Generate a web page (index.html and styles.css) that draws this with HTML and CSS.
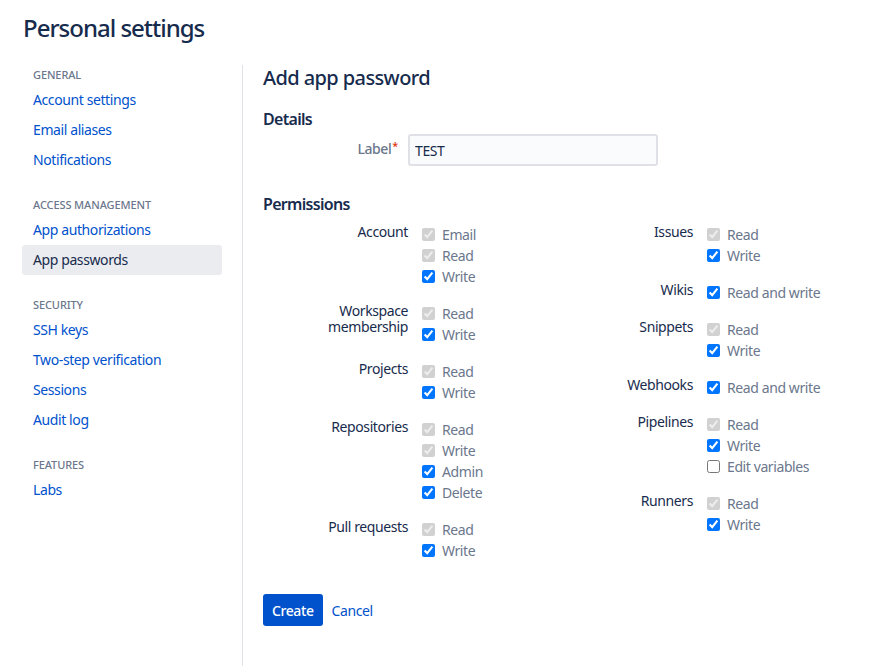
FILE: index.html
```html
<!DOCTYPE html>
<html lang="en">
<head>
<meta charset="utf-8">
<title>Personal settings</title>
<link rel="stylesheet" href="styles.css">
</head>
<body>
<div class="page">
  <h1 class="page-title">Personal settings</h1>
  <div class="layout">
    <nav class="sidebar">
      <div class="nav-section">
        <div class="nav-heading">GENERAL</div>
        <a class="nav-item" href="#">Account settings</a>
        <a class="nav-item" href="#">Email aliases</a>
        <a class="nav-item" href="#">Notifications</a>
      </div>
      <div class="nav-section">
        <div class="nav-heading">ACCESS MANAGEMENT</div>
        <a class="nav-item" href="#">App authorizations</a>
        <a class="nav-item active" href="#">App passwords</a>
      </div>
      <div class="nav-section">
        <div class="nav-heading">SECURITY</div>
        <a class="nav-item" href="#">SSH keys</a>
        <a class="nav-item" href="#">Two-step verification</a>
        <a class="nav-item" href="#">Sessions</a>
        <a class="nav-item" href="#">Audit log</a>
      </div>
      <div class="nav-section">
        <div class="nav-heading">FEATURES</div>
        <a class="nav-item" href="#">Labs</a>
      </div>
    </nav>
    <main class="main">
      <h2 class="main-title">Add app password</h2>
      <h3 class="section-title">Details</h3>
      <div class="field-row">
        <label class="field-label" for="lbl">Label<span class="req">*</span></label>
        <input id="lbl" class="text-input" type="text" value="TEST">
      </div>
      <h3 class="section-title perm-title">Permissions</h3>
      <div class="perms">
        <div class="perm-col">
          <div class="group">
            <div class="group-label">Account</div>
            <div class="options">
              <label class="opt"><input type="checkbox" checked disabled>Email</label>
              <label class="opt"><input type="checkbox" checked disabled>Read</label>
              <label class="opt"><input type="checkbox" checked>Write</label>
            </div>
          </div>
          <div class="group">
            <div class="group-label">Workspace membership</div>
            <div class="options">
              <label class="opt"><input type="checkbox" checked disabled>Read</label>
              <label class="opt"><input type="checkbox" checked>Write</label>
            </div>
          </div>
          <div class="group">
            <div class="group-label">Projects</div>
            <div class="options">
              <label class="opt"><input type="checkbox" checked disabled>Read</label>
              <label class="opt"><input type="checkbox" checked>Write</label>
            </div>
          </div>
          <div class="group">
            <div class="group-label">Repositories</div>
            <div class="options">
              <label class="opt"><input type="checkbox" checked disabled>Read</label>
              <label class="opt"><input type="checkbox" checked disabled>Write</label>
              <label class="opt"><input type="checkbox" checked>Admin</label>
              <label class="opt"><input type="checkbox" checked>Delete</label>
            </div>
          </div>
          <div class="group">
            <div class="group-label">Pull requests</div>
            <div class="options">
              <label class="opt"><input type="checkbox" checked disabled>Read</label>
              <label class="opt"><input type="checkbox" checked>Write</label>
            </div>
          </div>
        </div>
        <div class="perm-col">
          <div class="group">
            <div class="group-label">Issues</div>
            <div class="options">
              <label class="opt"><input type="checkbox" checked disabled>Read</label>
              <label class="opt"><input type="checkbox" checked>Write</label>
            </div>
          </div>
          <div class="group">
            <div class="group-label">Wikis</div>
            <div class="options">
              <label class="opt"><input type="checkbox" checked>Read and write</label>
            </div>
          </div>
          <div class="group">
            <div class="group-label">Snippets</div>
            <div class="options">
              <label class="opt"><input type="checkbox" checked disabled>Read</label>
              <label class="opt"><input type="checkbox" checked>Write</label>
            </div>
          </div>
          <div class="group">
            <div class="group-label">Webhooks</div>
            <div class="options">
              <label class="opt"><input type="checkbox" checked>Read and write</label>
            </div>
          </div>
          <div class="group">
            <div class="group-label">Pipelines</div>
            <div class="options">
              <label class="opt"><input type="checkbox" checked disabled>Read</label>
              <label class="opt"><input type="checkbox" checked>Write</label>
              <label class="opt"><input type="checkbox">Edit variables</label>
            </div>
          </div>
          <div class="group">
            <div class="group-label">Runners</div>
            <div class="options">
              <label class="opt"><input type="checkbox" checked disabled>Read</label>
              <label class="opt"><input type="checkbox" checked>Write</label>
            </div>
          </div>
        </div>
      </div>
      <div class="actions">
        <button class="btn-primary" type="button">Create</button>
        <a class="link-btn" href="#">Cancel</a>
      </div>
    </main>
  </div>
</div>
</body>
</html>
```

FILE: styles.css
```css
* { box-sizing: border-box; }

html, body {
  margin: 0;
  padding: 0;
  background: #ffffff;
}

body {
  font-family: "Noto Sans", "Open Sans", sans-serif;
  font-size: 14px;
  letter-spacing: -0.4px;
  color: #172b4d;
}

.page {
  padding: 14px 0 0 22px;
  min-height: 100vh;
  display: flex;
  flex-direction: column;
}

.page-title {
  margin: 0 0 23px 1px;
  font-size: 24px;
  line-height: 28px;
  font-weight: 500;
  letter-spacing: -1px;
  color: #172b4d;
}

.layout {
  flex: 1;
  display: flex;
}

.sidebar {
  width: 200px;
  flex: none;
  padding-top: 2px;
  margin-right: 20px;
}

.nav-section + .nav-section {
  margin-top: 22px;
}

.nav-heading {
  font-size: 11px;
  line-height: 16px;
  font-weight: 500;
  letter-spacing: -0.1px;
  color: #6b778c;
  padding-left: 11px;
  margin-bottom: 2px;
}

.nav-item {
  display: block;
  height: 30px;
  line-height: 30px;
  padding-left: 11px;
  color: #0052cc;
  text-decoration: none;
  border-radius: 3px;
}

.nav-item.active {
  background: #ebecf0;
  color: #172b4d;
}

.main {
  flex: 1;
  border-left: 1px solid #dfe1e6;
  padding-left: 20px;
}

.main-title {
  margin: 1px 0 19px;
  font-size: 20px;
  line-height: 24px;
  font-weight: 500;
  letter-spacing: -0.6px;
  color: #172b4d;
}

.section-title {
  margin: 0;
  font-size: 16px;
  line-height: 20px;
  font-weight: 600;
  letter-spacing: -0.7px;
  color: #172b4d;
}

.field-row {
  display: flex;
  align-items: center;
  margin-top: 5px;
}

.field-label {
  width: 135px;
  text-align: right;
  margin-right: 10px;
  color: #6b778c;
  font-weight: 500;
  font-size: 14px;
  line-height: 20px;
  margin-top: -3px;
}

.req {
  color: #de350b;
  font-size: 11px;
  vertical-align: top;
  margin-left: 1px;
  line-height: 14px;
}

.text-input {
  width: 250px;
  height: 32px;
  border: 2px solid #dfe1e6;
  border-radius: 3px;
  background: #fafbfc;
  padding: 0 5px;
  font-family: inherit;
  font-size: 14px;
  letter-spacing: -0.4px;
  color: #172b4d;
}

.perm-title {
  margin-top: 28px;
}

.perms {
  display: flex;
  margin-top: 7px;
}

.perm-col {
  width: 285px;
  display: flex;
  flex-direction: column;
  gap: 13px;
}

.group {
  display: grid;
  grid-template-columns: 145px 1fr;
  column-gap: 14px;
}

.group-label {
  text-align: right;
  line-height: 16px;
  padding-top: 3px;
  color: #172b4d;
}

.options {
  padding-top: 3px;
  display: flex;
  flex-direction: column;
}

.opt {
  display: flex;
  align-items: center;
  height: 21px;
  color: #6b778c;
  white-space: nowrap;
}

.opt input {
  margin: 0 7px 0 0;
  width: 13px;
  height: 13px;
}

.actions {
  display: flex;
  align-items: center;
  margin-top: 33px;
  gap: 9px;
}

.btn-primary {
  height: 32px;
  padding: 0 9px;
  border: none;
  border-radius: 3px;
  background: #0052cc;
  color: #ffffff;
  font-family: inherit;
  font-size: 14px;
  font-weight: 500;
  letter-spacing: -0.4px;
}

.link-btn {
  color: #0052cc;
  text-decoration: none;
}
```
